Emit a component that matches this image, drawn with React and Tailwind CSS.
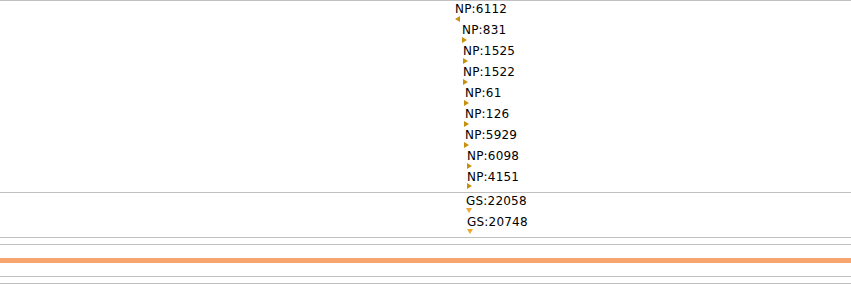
import React from "react";

// label positions inside each track (x = text left, y = top of text box)
const npLabels = [
  { text: "NP:6112", x: 455, y: 1, mx: 455, my: 15, dir: "left" },
  { text: "NP:831", x: 462, y: 22, mx: 462, my: 36, dir: "right" },
  { text: "NP:1525", x: 463, y: 43, mx: 463, my: 57, dir: "right" },
  { text: "NP:1522", x: 463, y: 64, mx: 463, my: 78, dir: "right" },
  { text: "NP:61", x: 465, y: 85, mx: 464, my: 99, dir: "right" },
  { text: "NP:126", x: 465, y: 106, mx: 464, my: 120, dir: "right" },
  { text: "NP:5929", x: 465, y: 127, mx: 464, my: 141, dir: "right" },
  { text: "NP:6098", x: 467, y: 148, mx: 467, my: 162, dir: "right" },
  { text: "NP:4151", x: 467, y: 169, mx: 467, my: 182, dir: "right" },
];

const gsLabels = [
  { text: "GS:22058", x: 466, y: 1, mx: 466, my: 15, dir: "down" },
  { text: "GS:20748", x: 467, y: 22, mx: 467, my: 36, dir: "down" },
];

function Marker({ dir, x, y }) {
  const points = {
    left: "5,0 5,6 0,3",
    right: "0,0 5,3 0,6",
    down: "0,0 6,0 3,5",
  }[dir];
  const fill = dir === "down" ? "#f0a830" : "#c8900c";
  return (
    <svg
      width="6"
      height="6"
      className="absolute"
      style={{ left: x, top: y }}
    >
      <polygon points={points} fill={fill} />
    </svg>
  );
}

function Label({ item }) {
  return (
    <>
      <div
        className="absolute text-[12px] leading-[14px] text-black whitespace-nowrap tracking-[0.2px]"
        style={{ left: item.x, top: item.y }}
      >
        {item.text}
      </div>
      <Marker dir={item.dir} x={item.mx} y={item.my} />
    </>
  );
}

export default function App() {
  return (
    <div
      className="w-[851px] h-[284px] bg-white overflow-hidden"
      style={{ fontFamily: '"DejaVu Sans", sans-serif' }}
    >
      {/* NP track */}
      <div className="relative h-[193px] border-t border-b border-[#c0c0c0] box-border">
        {npLabels.map((l) => (
          <Label key={l.text} item={l} />
        ))}
      </div>
      {/* GS track */}
      <div className="relative h-[45px] border-b border-[#c0c0c0] box-border">
        {gsLabels.map((l) => (
          <Label key={l.text} item={l} />
        ))}
      </div>
      <div className="h-[7px] border-b border-[#c0c0c0] box-border" />
      <div className="h-[13px]" />
      <div className="h-[5px] bg-[#f6a56f]" />
      <div className="h-[14px] border-b border-[#c0c0c0] box-border" />
      <div className="h-[7px] border-b border-[#c0c0c0] box-border" />
    </div>
  );
}
